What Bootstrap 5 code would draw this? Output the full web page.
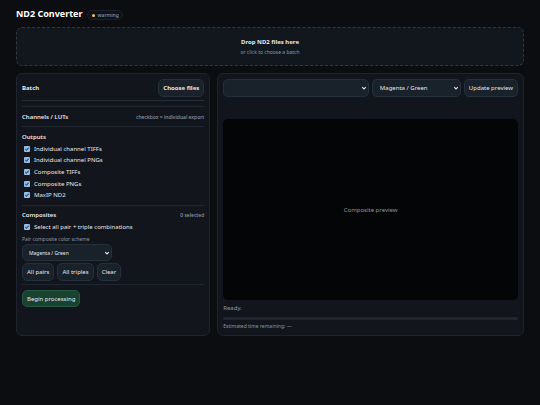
<!DOCTYPE html>
<html lang="en" data-bs-theme="dark">
<head>
<meta charset="utf-8">
<meta name="viewport" content="width=device-width, initial-scale=1">
<title>ND2 Converter</title>
<link href="https://cdn.jsdelivr.net/npm/bootstrap@5.3.0/dist/css/bootstrap.min.css" rel="stylesheet">
<style>
body{background:#0b0d11;color:#e3e7ed;font:6px/8px "Noto Sans",sans-serif}
.page{padding:7px 16px}
.page-head{gap:5px;margin-bottom:7px}
.app-title{font-size:9px;line-height:13px;font-weight:700}
.status-pill{height:10px;padding:0 3px 0 4px;gap:2px;border:1px solid #1b212b;border-radius:5px;font-size:5px;line-height:8px;font-weight:500;color:#8d96a3;background:#0e1116}
.status-dot{width:3px;height:3px;border-radius:50%;background:#f2c65b}
.drop-zone{width:100%;height:39px;gap:2px;border:1px dashed #2f3742;border-radius:6px;background:#12161d;color:inherit;margin-bottom:7px}
.muted-text{color:#8d96a3}
.tiny-text{font-size:5px}
.note-text{font-size:5px;font-weight:500}
.panels{display:grid;grid-template-columns:38fr 60fr;gap:7px}
.panel{background:#12151c;border:1px solid #1d242d;border-radius:6px;padding:5px;min-width:0}
.tool-btn,.tool-select{height:18px;border:1px solid #25303a;border-radius:5px;background-color:#19212a;color:#e3e7ed;font-size:6px;line-height:8px}
.tool-btn{padding:0 4px;white-space:nowrap}
.btn-row{gap:3px}
.tool-select{padding:0 14px 0 7px;background-size:6px 6px;background-position:right 1px center;background-image:url("data:image/svg+xml,%3Csvg xmlns='http://www.w3.org/2000/svg' viewBox='0 0 6 6'%3E%3Cpath d='M1.2 2.2 3 4 4.8 2.2' fill='none' stroke='%23e3e7ed' stroke-width='1.1'/%3E%3C/svg%3E")}
.short-ctl{height:17px}
.scheme-select{width:90px;padding-left:6px;font-size:5px;margin:1px 0 2px}
.preview-scheme{flex:0 0 89px}
.start-btn{background:#194330;border-color:#24583f}
.rule{height:1px;background:#20262f}
.rule-batch{margin:3px 0 5px;background:#282e38}
.rule-section{margin:5px 0 6px}
.rule-outputs{margin:4px 0 5px}
.rule-actions{margin:3px 0 5px}
.head{height:8px;font-weight:600}
.head-channels{margin-top:6px}
.checks{display:grid;grid-template-rows:repeat(5,1fr);height:58px;margin-top:2px}
.check-row{display:flex;align-items:center;gap:4px;padding-left:2px;min-height:8px}
.check-all{margin:4px 0}
.check-row .form-check-input{width:6px;height:6px;margin:0;border:0;border-radius:1px;background-color:#91bdea;background-size:6px 6px;background-image:url("data:image/svg+xml,%3Csvg xmlns='http://www.w3.org/2000/svg' viewBox='0 0 6 6'%3E%3Cpath d='m1.3 3 1.2 1.2 2.2-2.5' fill='none' stroke='%2312151c' stroke-width='1'/%3E%3C/svg%3E")}
.viewer{flex:1 0 181px;margin:22px 0 4px;border-radius:5px;background:#040507}
.meter{height:3px;margin:5px 0 2px;border-radius:2px;background:#20252f}
</style>
<script src="https://cdn.jsdelivr.net/npm/bootstrap@5.3.0/dist/js/bootstrap.bundle.min.js"></script>
</head>
<body>
<div class="page">
  <header class="page-head d-flex align-items-end">
    <h1 class="app-title m-0">ND2 Converter</h1>
    <span class="status-pill d-flex align-items-center"><span class="status-dot"></span>warming</span>
  </header>
  <main>
    <button type="button" class="drop-zone d-flex flex-column align-items-center justify-content-center p-0">
      <strong>Drop ND2 files here</strong>
      <span class="muted-text tiny-text">or click to choose a batch</span>
    </button>
    <div class="panels">
      <section class="panel">
        <div class="d-flex justify-content-between align-items-center">
          <strong>Batch</strong>
          <button type="button" class="btn tool-btn fw-bold">Choose files</button>
        </div>
        <div class="rule rule-batch"></div>
        <div class="rule"></div>
        <div class="head head-channels d-flex justify-content-between"><span>Channels / LUTs</span><span class="muted-text note-text">checkbox = individual export</span></div>
        <div class="rule rule-section"></div>
        <div class="head">Outputs</div>
        <div class="checks">
          <label class="check-row"><input class="form-check-input" type="checkbox" checked>Individual channel TIFFs</label>
          <label class="check-row"><input class="form-check-input" type="checkbox" checked>Individual channel PNGs</label>
          <label class="check-row"><input class="form-check-input" type="checkbox" checked>Composite TIFFs</label>
          <label class="check-row"><input class="form-check-input" type="checkbox" checked>Composite PNGs</label>
          <label class="check-row"><input class="form-check-input" type="checkbox" checked>MaxIP ND2</label>
        </div>
        <div class="rule rule-outputs"></div>
        <div class="head d-flex justify-content-between"><span>Composites</span><span class="muted-text note-text">0 selected</span></div>
        <label class="check-row check-all"><input class="form-check-input" type="checkbox" checked>Select all pair + triple combinations</label>
        <label class="muted-text tiny-text d-block" for="pair-scheme">Pair composite color scheme</label>
        <select class="form-select tool-select short-ctl scheme-select" id="pair-scheme"><option>Magenta / Green</option></select>
        <div class="btn-row d-flex">
          <button type="button" class="btn tool-btn">All pairs</button>
          <button type="button" class="btn tool-btn">All triples</button>
          <button type="button" class="btn tool-btn">Clear</button>
        </div>
        <div class="rule rule-actions"></div>
        <button type="button" class="btn tool-btn short-ctl start-btn">Begin processing</button>
      </section>
      <section class="panel d-flex flex-column">
        <div class="btn-row d-flex">
          <select class="form-select tool-select" aria-label="Composite"></select>
          <select class="form-select tool-select preview-scheme" aria-label="Color scheme"><option>Magenta / Green</option></select>
          <button type="button" class="btn tool-btn">Update preview</button>
        </div>
        <div class="viewer d-flex align-items-center justify-content-center muted-text">Composite preview</div>
        <div class="muted-text">Ready.</div>
        <div class="meter"></div>
        <div class="muted-text tiny-text">Estimated time remaining: —</div>
      </section>
    </div>
  </main>
</div>
</body>
</html>
